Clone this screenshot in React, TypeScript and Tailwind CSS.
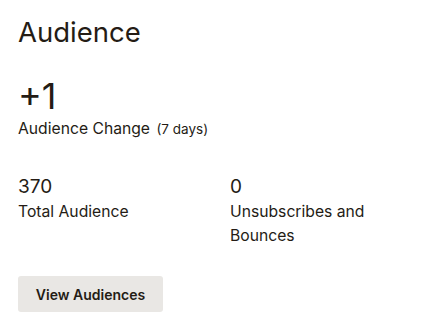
export default function App() {
  return (
    <div className="w-[421px] h-[330px] bg-white text-[#241c15] px-[18px] pt-[14px]" style={{ fontFamily: 'Inter, "Helvetica Neue", Arial, sans-serif' }}>
      <h1 className="text-[27.5px] leading-[36px] font-normal">Audience</h1>

      <div className="mt-[26px]">
        <div className="text-[36px] leading-[40px] font-normal">+1</div>
        <p className="text-[15.7px] leading-[22px] mt-[2px]">
          Audience Change <span className="text-[13.5px] ml-[2px]">(7 days)</span>
        </p>
      </div>

      <div className="grid grid-cols-[212px_1fr] mt-[34px]">
        <div>
          <div className="text-[19px] leading-[26px]">370</div>
          <div className="text-[15.7px] leading-[24px]">Total Audience</div>
        </div>
        <div>
          <div className="text-[19px] leading-[26px]">0</div>
          <div className="text-[15.7px] leading-[24px] w-[150px]">Unsubscribes and Bounces</div>
        </div>
      </div>

      <button className="mt-[28px] h-[36px] w-[145px] rounded-[3px] bg-[#e9e7e4] text-[14px] font-semibold">
        View Audiences
      </button>
    </div>
  );
}
